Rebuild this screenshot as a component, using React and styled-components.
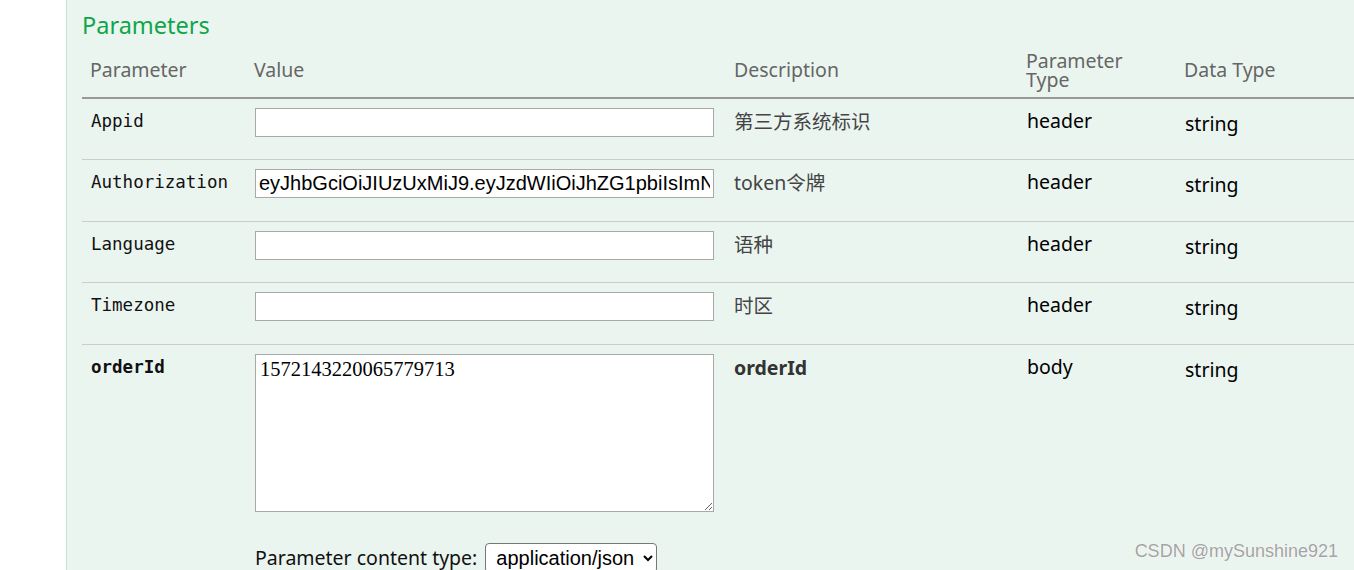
// Libraries
import React from 'react'
import styled, { createGlobalStyle } from 'styled-components'

const SANS = `'Noto Sans', 'Noto Sans CJK SC', sans-serif`
const MONO = `'DejaVu Sans Mono', monospace`

const params = [
  { name: 'Appid', value: '', desc: '第三方系统标识', type: 'header' },
  {
    name: 'Authorization',
    value:
      'eyJhbGciOiJIUzUxMiJ9.eyJzdWIiOiJhZG1pbiIsImNyZWF0ZWQiOjE2NjY4NjQ3NzU4NzQsImV4cCI6MTY2NzQ2OTU3NX0',
    desc: 'token令牌',
    type: 'header'
  },
  { name: 'Language', value: '', desc: '语种', type: 'header' },
  { name: 'Timezone', value: '', desc: '时区', type: 'header' }
]

const App = () => {
  return (
    <Page>
      <GlobalStyle />
      <Panel>
        <Title>Parameters</Title>
        <ParamTable>
          <colgroup>
            <col style={{ width: 165 }} />
            <col style={{ width: 478 }} />
            <col style={{ width: 292 }} />
            <col style={{ width: 158 }} />
            <col style={{ width: 179 }} />
          </colgroup>
          <thead>
            <tr>
              <HeadCell>Parameter</HeadCell>
              <HeadCell $tight>Value</HeadCell>
              <HeadCell $wide>Description</HeadCell>
              <HeadCell $wide>Parameter<br />Type</HeadCell>
              <HeadCell $wide>Data Type</HeadCell>
            </tr>
          </thead>
          <tbody>
            {params.map(p => (
              <tr key={p.name}>
                <NameCell>{p.name}</NameCell>
                <ValueCell>
                  <TextInput type="text" defaultValue={p.value} />
                </ValueCell>
                <DescCell>{p.desc}</DescCell>
                <TypeCell>{p.type}</TypeCell>
                <DataTypeCell>string</DataTypeCell>
              </tr>
            ))}
            <tr>
              <NameCell $bold>orderId</NameCell>
              <ValueCell>
                <BodyArea defaultValue="1572143220065779713" />
                <ContentType>
                  <ContentLabel>Parameter content type:</ContentLabel>
                  <TypeSelect defaultValue="application/json">
                    <option value="application/json">application/json</option>
                  </TypeSelect>
                </ContentType>
              </ValueCell>
              <DescCell $bold>orderId</DescCell>
              <TypeCell>body</TypeCell>
              <DataTypeCell>string</DataTypeCell>
            </tr>
          </tbody>
        </ParamTable>
      </Panel>
      <Watermark>CSDN @mySunshine921</Watermark>
    </Page>
  )
}

const GlobalStyle = createGlobalStyle`
  html, body {
    margin: 0;
    padding: 0;
    background: #fff;
    overflow: hidden;
  }
  body {
    font-family: ${SANS};
  }
`

const Page = styled.div`
  position: relative;
  height: 570px;
  padding-left: 66px;
  overflow: hidden;
`

const Panel = styled.div`
  box-sizing: border-box;
  width: 1288px;
  min-height: 570px;
  background-color: #ebf5f0;
  border-left: 1px solid #bfe6cf;
  padding: 10px 0 0 15px;
`

const Title = styled.h4`
  margin: 0 0 2.8px 0;
  font-family: ${SANS};
  font-size: 23.5px;
  line-height: 30px;
  font-weight: normal;
  color: #10a54a;
`

const ParamTable = styled.table`
  width: 1272px;
  table-layout: fixed;
  border-collapse: separate;
  border-spacing: 0;
`

const HeadCell = styled.th`
  padding: 8px 7px 8px ${p => (p.$wide ? '9px' : p.$tight ? '7px' : '8px')};
  text-align: left;
  vertical-align: middle;
  font-family: ${SANS};
  font-size: 19.5px;
  line-height: 19px;
  font-weight: normal;
  color: #666;
  border-bottom: 2px solid #999;
`

const Cell = styled.td`
  vertical-align: top;
  padding: 0 8px;
  border-bottom: 1px solid #ccc;
  font-family: ${SANS};
  font-size: 19.5px;
  line-height: 26px;
  color: #000;
`

const NameCell = styled(Cell)`
  padding: 11px 8px 0 9px;
  font-family: ${MONO};
  font-size: 17.5px;
  line-height: 22px;
  font-weight: ${p => (p.$bold ? 'bold' : 'normal')};
  color: #111;
`

const ValueCell = styled(Cell)`
  padding: 9px 8px 22.5px 8px;
`

const DescCell = styled(Cell)`
  padding: 10px 8px 0 9px;
  color: ${p => (p.$bold ? '#333' : '#444')};
  font-weight: ${p => (p.$bold ? 'bold' : 'normal')};
`

const TypeCell = styled(Cell)`
  padding: 9px 8px 0 10px;
`

const DataTypeCell = styled(Cell)`
  padding: 12px 8px 0 10px;
`

const TextInput = styled.input`
  display: block;
  box-sizing: border-box;
  width: 459px;
  height: 29px;
  margin: 0;
  padding: 1px 3px;
  border: 1px solid #a9a9a9;
  border-radius: 0;
  background: #fff;
  font-family: 'Liberation Sans', Arial, sans-serif;
  font-size: 20px;
  color: #000;
  outline: none;
`

const BodyArea = styled.textarea`
  display: block;
  box-sizing: border-box;
  width: 459px;
  height: 158px;
  margin: 0;
  padding: 3px 4px;
  border: 1px solid #a9a9a9;
  background: #fff;
  font-family: 'Liberation Serif', 'Times New Roman', serif;
  font-size: 20.5px;
  color: #000;
  outline: none;
`

const ContentType = styled.div`
  display: flex;
  align-items: baseline;
  gap: 8px;
  margin-top: 31px;
`

const ContentLabel = styled.label`
  font-family: ${SANS};
  font-size: 19.5px;
  color: #111;
  white-space: nowrap;
`

const TypeSelect = styled.select`
  font-family: 'Liberation Sans', Arial, sans-serif;
  font-size: 20px;
  color: #000;
  background-color: #fff;
  border: 1px solid #767676;
  border-radius: 4px;
  padding: 1px 6px 1px 6px;
  height: 30px;
`

const Watermark = styled.div`
  position: absolute;
  right: 16px;
  top: 541px;
  font-family: 'Liberation Sans', Arial, sans-serif;
  font-size: 18px;
  line-height: 20px;
  color: #a3a3a3;
  text-shadow: 0 0 1px #fff, 0 0 1px #fff;
  pointer-events: none;
`

export default App
